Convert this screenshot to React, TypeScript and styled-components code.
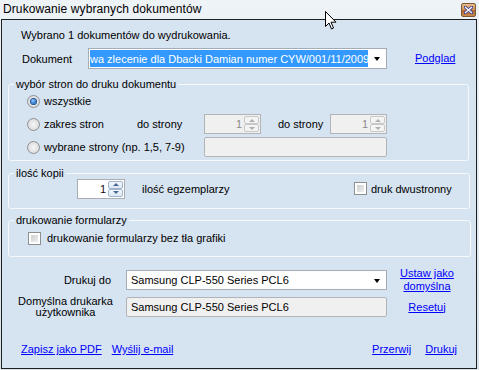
import React from "react";
import styled, { createGlobalStyle } from "styled-components";

const GlobalStyle = createGlobalStyle`
  html, body {
    margin: 0;
    padding: 0;
    background: #dfe8ef;
  }
  body {
    font-family: "Liberation Sans", Arial, sans-serif;
    font-size: 11px;
    color: #000;
  }
`;

const LINK = "#0000ff";

const Window = styled.div`
  position: relative;
  width: 479px;
  height: 370px;
  display: flex;
  flex-direction: column;
  overflow: hidden;
  background: linear-gradient(180deg, #eef3f7 0%, #e2eaf0 60%, #d8e3ec 100%);
`;

const TitleBar = styled.div`
  height: 19px;
  display: flex;
  align-items: center;
  justify-content: space-between;
  padding: 0 3px 1px 3px;
  box-sizing: border-box;
`;

const TitleText = styled.span`
  font-size: 12px;
  color: #000;
  letter-spacing: 0.1px;
`;

const CloseButton = styled.div`
  width: 15px;
  height: 14px;
  margin-top: 1px;
  box-sizing: border-box;
  border: 1px solid #7d5a35;
  border-radius: 2px;
  background: linear-gradient(180deg, #e6b98a 0%, #d39a63 45%, #b0652b 55%, #c98950 100%);
  display: flex;
  align-items: center;
  justify-content: center;
`;

const Cursor = styled.svg`
  position: absolute;
  left: 325px;
  top: 11px;
`;

const Body = styled.div`
  flex: 1;
  margin: 0 2px 1px 1px;
  border: 1px solid #1f1f1f;
  background: #d6e3f0;
  display: flex;
  flex-direction: column;
`;

const Info = styled.div`
  margin: 9px 0 0 19px;
  line-height: 13px;
`;

const DocRow = styled.div`
  display: flex;
  align-items: center;
  height: 21px;
  margin-top: 6px;
  padding-left: 20px;
`;

const DocLabel = styled.span`
  width: 66px;
`;

const Combo = styled.div<{ $width: number; $height: number }>`
  width: ${(p) => p.$width}px;
  height: ${(p) => p.$height}px;
  box-sizing: border-box;
  border: 1px solid #a5acb5;
  background: #fff;
  display: flex;
  align-items: center;
  padding: 1px;
`;

const ComboText = styled.span<{ $selected?: boolean }>`
  flex: 1;
  height: 100%;
  display: flex;
  align-items: center;
  overflow: hidden;
  white-space: nowrap;
  padding-left: ${(p) => (p.$selected ? 0 : 3)}px;
  background: ${(p) => (p.$selected ? "#3399ff" : "transparent")};
  color: ${(p) => (p.$selected ? "#fff" : "#000")};
`;

const DropArrow = styled.span`
  width: 17px;
  height: 100%;
  display: flex;
  align-items: center;
  justify-content: center;
  &::after {
    content: "";
    border-left: 3.5px solid transparent;
    border-right: 3.5px solid transparent;
    border-top: 4px solid #000;
    margin-top: 1px;
  }
`;

const Link = styled.a<{ $center?: boolean }>`
  color: ${LINK};
  text-decoration: underline;
  line-height: 13px;
  text-align: ${(p) => (p.$center ? "center" : "left")};
  cursor: pointer;
`;

const Group = styled.fieldset<{ $right: number; $top: number }>`
  margin: ${(p) => p.$top}px ${(p) => p.$right}px 0 6px;
  padding: 0;
  border: 1px solid #f6f9fc;
  border-radius: 3px;
  min-width: 0;
`;

const Legend = styled.legend`
  margin-left: 5px;
  padding: 0 2px;
  line-height: 13px;
`;

const GroupBody = styled.div<{ $pt: number; $pb: number }>`
  display: flex;
  flex-direction: column;
  gap: 3px;
  margin-top: ${(p) => p.$pt}px;
  padding-bottom: ${(p) => p.$pb}px;
`;

const Row = styled.div<{ $indent: number; $height?: number }>`
  display: flex;
  align-items: center;
  height: ${(p) => p.$height ?? 20}px;
  padding-left: ${(p) => p.$indent}px;
`;

const Option = styled.label<{ $width?: number; $gap?: number }>`
  display: flex;
  align-items: center;
  gap: ${(p) => p.$gap ?? 4}px;
  width: ${(p) => (p.$width ? `${p.$width}px` : "auto")};
  flex-shrink: 0;
`;

const Radio = styled.span<{ $checked?: boolean }>`
  width: 13px;
  height: 13px;
  box-sizing: border-box;
  border-radius: 50%;
  border: 1px solid #8d9096;
  background: radial-gradient(circle at 50% 50%, #f6f6f6 0%, #e2e2e2 60%, #cfcfcf 100%);
  display: flex;
  align-items: center;
  justify-content: center;
  &::after {
    content: "";
    display: ${(p) => (p.$checked ? "block" : "none")};
    width: 5px;
    height: 5px;
    border-radius: 50%;
    background: radial-gradient(circle at 40% 35%, #9fd0ff 0%, #2f7ed8 55%, #0c3f8c 100%);
    box-shadow: 0 0 0 1px #1d4f91;
  }
`;

const Check = styled.span`
  width: 13px;
  height: 13px;
  box-sizing: border-box;
  border: 1px solid #8e8f8f;
  background: #fff;
  display: flex;
  &::after {
    content: "";
    flex: 1;
    margin: 2px;
    background: linear-gradient(135deg, #cfcfcf 0%, #eeeeee 100%);
  }
`;

const Caption = styled.span<{ $width?: number; $offset?: number }>`
  width: ${(p) => (p.$width ? `${p.$width}px` : "auto")};
  margin-left: ${(p) => p.$offset ?? 0}px;
  flex-shrink: 0;
`;

const Spinner = styled.div<{ $width: number; $disabled?: boolean }>`
  width: ${(p) => p.$width}px;
  height: 20px;
  box-sizing: border-box;
  border: 1px solid ${(p) => (p.$disabled ? "#b2b4b8" : "#abadb3")};
  background: ${(p) => (p.$disabled ? "#f0f0f0" : "#fff")};
  display: flex;
  flex-shrink: 0;
`;

const SpinValue = styled.span<{ $disabled?: boolean }>`
  flex: 1;
  text-align: right;
  padding-right: 2px;
  line-height: 18px;
  color: ${(p) => (p.$disabled ? "#8a8a8a" : "#1a0a10")};
`;

const SpinButtons = styled.div`
  width: 15px;
  display: flex;
  flex-direction: column;
  margin: 1px 1px 1px 0;
`;

const SpinHalf = styled.div<{ $up?: boolean; $disabled?: boolean }>`
  flex: 1;
  box-sizing: border-box;
  border: 1px solid ${(p) => (p.$disabled ? "#c8c8c8" : "#a0b4cc")};
  border-radius: 2px;
  background: ${(p) =>
    p.$disabled ? "#f4f4f4" : "linear-gradient(180deg, #f2f7fc 0%, #dce8f4 100%)"};
  display: flex;
  align-items: center;
  justify-content: center;
  &::after {
    content: "";
    border-left: 3px solid transparent;
    border-right: 3px solid transparent;
    ${(p) =>
      p.$up
        ? `border-bottom: 3px solid ${p.$disabled ? "#b0b0b0" : "#4a6a90"};`
        : `border-top: 3px solid ${p.$disabled ? "#b0b0b0" : "#4a6a90"};`}
  }
`;

const TextBox = styled.div<{ $width: number; $height?: number }>`
  width: ${(p) => p.$width}px;
  height: ${(p) => p.$height ?? 20}px;
  box-sizing: border-box;
  border: 1px solid #b2b4b8;
  border-radius: 2px;
  background: #f0f0f0;
  display: flex;
  align-items: center;
  padding-left: 4px;
  flex-shrink: 0;
`;

const PrinterGrid = styled.div`
  display: grid;
  grid-template-columns: 99px 261px 58px;
  grid-template-rows: 26px 20px;
  column-gap: 11px;
  row-gap: 4px;
  align-items: center;
  margin: 10px 0 0 14px;
`;

const PrinterLabel = styled.span<{ $center?: boolean }>`
  text-align: ${(p) => (p.$center ? "center" : "right")};
  padding-right: ${(p) => (p.$center ? 0 : 4)}px;
  line-height: 11px;
`;

const LinkCell = styled.div`
  display: flex;
  flex-direction: column;
  align-items: center;
`;

const Footer = styled.div`
  margin-top: auto;
  padding: 0 19px 12px 19px;
  display: flex;
  justify-content: space-between;
`;

const LinkGroup = styled.div<{ $gap: number }>`
  display: flex;
  gap: ${(p) => p.$gap}px;
`;

const SpinBox = ({ width, value, disabled }: { width: number; value: string; disabled?: boolean }) => (
  <Spinner $width={width} $disabled={disabled}>
    <SpinValue $disabled={disabled}>{value}</SpinValue>
    <SpinButtons>
      <SpinHalf $up $disabled={disabled} />
      <SpinHalf $disabled={disabled} />
    </SpinButtons>
  </Spinner>
);

const App = () => {
  return (
    <>
      <GlobalStyle />
      <Window>
        <TitleBar>
          <TitleText>Drukowanie wybranych dokumentów</TitleText>
          <CloseButton>
            <svg width="9" height="8" viewBox="0 0 9 8">
              <path d="M1 1 L8 7 M8 1 L1 7" stroke="#3b3f8f" strokeWidth="3" strokeLinecap="square" />
              <path d="M1 1 L8 7 M8 1 L1 7" stroke="#fff" strokeWidth="1.4" />
            </svg>
          </CloseButton>
        </TitleBar>
        <Body>
          <Info>Wybrano 1 dokumentów do wydrukowania.</Info>
          <DocRow>
            <DocLabel>Dokument</DocLabel>
            <Combo $width={299} $height={21}>
              <ComboText $selected>
                wa zlecenie dla Dbacki Damian numer CYW/001/11/2009
              </ComboText>
              <DropArrow />
            </Combo>
            <Link style={{ marginLeft: 28 }}>Podglad</Link>
          </DocRow>

          <Group $top={9} $right={7}>
            <Legend>wybór stron do druku dokumentu</Legend>
            <GroupBody $pt={0} $pb={3}>
              <Row $indent={18}>
                <Option>
                  <Radio $checked />
                  <span>wszystkie</span>
                </Option>
              </Row>
              <Row $indent={18}>
                <Option $width={110}>
                  <Radio />
                  <span>zakres stron</span>
                </Option>
                <Caption $width={67}>do strony</Caption>
                <SpinBox width={57} value="1" disabled />
                <Caption $width={52} $offset={17}>
                  do strony
                </Caption>
                <SpinBox width={57} value="1" disabled />
              </Row>
              <Row $indent={18}>
                <Option $width={177}>
                  <Radio />
                  <span>wybrane strony (np. 1,5, 7-9)</span>
                </Option>
                <TextBox $width={183} />
              </Row>
            </GroupBody>
          </Group>

          <Group $top={6} $right={6}>
            <Legend>ilość kopii</Legend>
            <GroupBody $pt={-2} $pb={9}>
              <Row $indent={68} $height={21}>
                <SpinBox width={48} value="1" />
                <Caption $width={212} $offset={17}>
                  ilość egzemplarzy
                </Caption>
                <Option>
                  <Check />
                  <span>druk dwustronny</span>
                </Option>
              </Row>
            </GroupBody>
          </Group>

          <Group $top={5} $right={5}>
            <Legend>drukowanie formularzy</Legend>
            <GroupBody $pt={1} $pb={8}>
              <Row $indent={19}>
                <Option $gap={6}>
                  <Check />
                  <span>drukowanie formularzy bez tła grafiki</span>
                </Option>
              </Row>
            </GroupBody>
          </Group>

          <PrinterGrid>
            <PrinterLabel>Drukuj do</PrinterLabel>
            <Combo $width={261} $height={20}>
              <ComboText>Samsung CLP-550 Series PCL6</ComboText>
              <DropArrow />
            </Combo>
            <LinkCell>
              <Link $center>Ustaw jako</Link>
              <Link $center>domyślna</Link>
            </LinkCell>
            <PrinterLabel $center>
              Domyślna drukarka
              <br />
              użytkownika
            </PrinterLabel>
            <TextBox $width={261}>Samsung CLP-550 Series PCL6</TextBox>
            <LinkCell>
              <Link $center>Resetuj</Link>
            </LinkCell>
          </PrinterGrid>

          <Footer>
            <LinkGroup $gap={10}>
              <Link>Zapisz jako PDF</Link>
              <Link>Wyślij e-mail</Link>
            </LinkGroup>
            <LinkGroup $gap={14}>
              <Link>Przerwij</Link>
              <Link>Drukuj</Link>
            </LinkGroup>
          </Footer>
        </Body>
        <Cursor width="12" height="19" viewBox="0 0 12 19">
          <path d="M0.5 0.5 L0.5 15.5 L4 12 L6.5 18 L8.5 17 L6 11.2 L11 11.2 Z" fill="#fff" stroke="#000" strokeWidth="1" />
        </Cursor>
      </Window>
    </>
  );
};

export default App;
